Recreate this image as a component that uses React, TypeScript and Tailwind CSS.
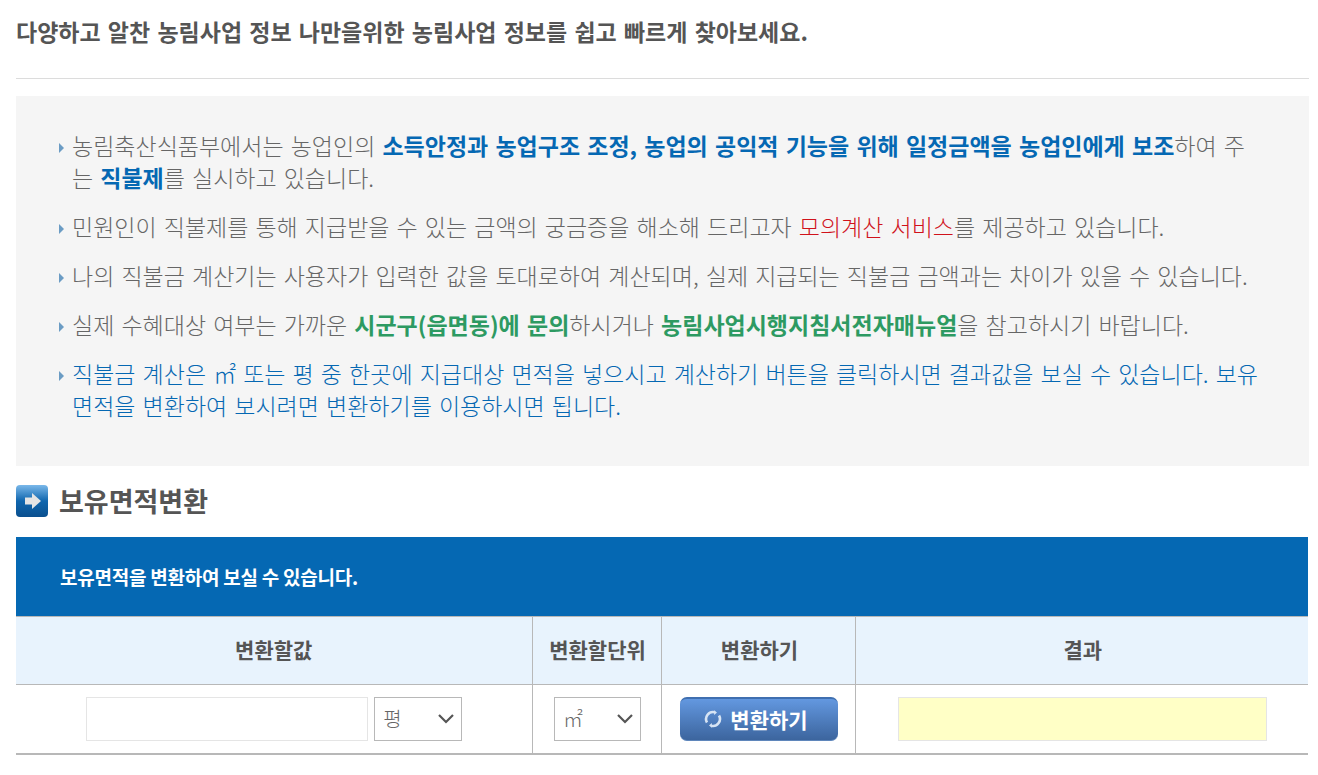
const font = "font-['Noto_Sans_CJK_KR','Noto_Sans',sans-serif]";

const Bullet = () => (
    <svg width="5" height="10" viewBox="0 0 5 10" className="absolute left-[43px] top-[14px]">
        <path d="M0 0 L5 5 L0 10 Z" fill="#6b9cc4" />
    </svg>
);

const Blue = ({ children }: { children: React.ReactNode }) => (
    <strong className="font-bold text-[#0568b3]">{children}</strong>
);

const Green = ({ children }: { children: React.ReactNode }) => (
    <strong className="font-bold text-[#2d9a62]">{children}</strong>
);

const Item = ({ children, className = "" }: { children: React.ReactNode; className?: string }) => (
    <li className={`relative pl-[56px] text-[23px] font-light leading-[32px] [word-spacing:2px] ${className}`}>
        <Bullet />
        {children}
    </li>
);

const UnitSelect = ({ label, width }: { label: string; width: string }) => (
    <div className={`flex h-[44px] items-center justify-between border border-[#b8b8b8] bg-white pl-[8px] pr-[6px] text-[20px] font-light text-[#666] ${width}`}>
        <span>{label}</span>
        <svg width="18" height="12" viewBox="0 0 18 12" fill="none" stroke="#555" strokeWidth="2.2">
            <path d="M2 2l7 7 7-7" />
        </svg>
    </div>
);

const App = () => {
    return (
        <div className={`h-[775px] w-[1318px] overflow-hidden bg-white pl-[16px] pr-[9px] text-[#666] ${font}`}>
            <h2 className="h-[79px] border-b border-[#dcdcdc] pt-[14px] text-[23px] font-bold leading-[34px] text-[#555] [word-spacing:2px]">
                다양하고 알찬 농림사업 정보 나만을위한 농림사업 정보를 쉽고 빠르게 찾아보세요.
            </h2>

            <div className="mt-[17px] h-[370px] bg-[#f5f5f5] pt-[33px] pr-[50px]">
                <ul className="flex flex-col gap-[17px]">
                    <Item>
                        농림축산식품부에서는 농업인의 <Blue>소득안정과 농업구조 조정, 농업의 공익적 기능을 위해 일정금액을 농업인에게 보조</Blue>하여 주는 <Blue>직불제</Blue>를 실시하고 있습니다.
                    </Item>
                    <Item>
                        민원인이 직불제를 통해 지급받을 수 있는 금액의 궁금증을 해소해 드리고자 <span className="text-[#d0121b]">모의계산 서비스</span>를 제공하고 있습니다.
                    </Item>
                    <Item>
                        나의 직불금 계산기는 사용자가 입력한 값을 토대로하여 계산되며, 실제 지급되는 직불금 금액과는 차이가 있을 수 있습니다.
                    </Item>
                    <Item>
                        실제 수혜대상 여부는 가까운 <Green>시군구(읍면동)에 문의</Green>하시거나 <Green>농림사업시행지침서전자매뉴얼</Green>을 참고하시기 바랍니다.
                    </Item>
                    <Item className="text-[#0568b3]">
                        직불금 계산은 ㎡ 또는 평 중 한곳에 지급대상 면적을 넣으시고 계산하기 버튼을 클릭하시면 결과값을 보실 수 있습니다. 보유면적을 변환하여 보시려면 변환하기를 이용하시면 됩니다.
                    </Item>
                </ul>
            </div>

            <div className="flex h-[71px] items-center gap-[11px] pb-[2px]">
                <svg width="32" height="32" viewBox="0 0 32 32">
                    <defs>
                        <linearGradient id="arrowBox" x1="0" y1="0" x2="0" y2="1">
                            <stop offset="0" stopColor="#7ab8ea" />
                            <stop offset="0.5" stopColor="#0f66ae" />
                            <stop offset="1" stopColor="#0a4f8e" />
                        </linearGradient>
                    </defs>
                    <rect width="32" height="32" rx="4" fill="url(#arrowBox)" />
                    <path d="M9 12.5h7V8l9 8-9 8v-4.5H9z" fill="#e4e4e4" />
                </svg>
                <h3 className="text-[27px] font-bold leading-[34px] text-[#555]">보유면적변환</h3>
            </div>

            <div className="flex h-[79px] w-[1292px] items-center bg-[#0568b3] pl-[44px] pt-[2px] text-[19px] font-bold tracking-[-0.25px] text-white">
                보유면적을 변환하여 보실 수 있습니다.
            </div>

            <table className="w-[1292px] table-fixed border-collapse border-t border-b-2 border-[#b8b8b8]">
                <colgroup>
                    <col className="w-[516px]" />
                    <col className="w-[129px]" />
                    <col className="w-[194px]" />
                    <col />
                </colgroup>
                <thead>
                    <tr className="h-[68px] border-b border-[#b8b8b8] bg-[#e8f3fd] text-[21px] font-bold text-[#555]">
                        <th className="border-r border-[#b8b8b8] pb-[2px]">변환할값</th>
                        <th className="border-r border-[#b8b8b8] pb-[2px] pl-[2px]">변환할단위</th>
                        <th className="border-r border-[#b8b8b8] pb-[2px] pl-[3px]">변환하기</th>
                        <th className="pb-[2px] pl-[2px]">결과</th>
                    </tr>
                </thead>
                <tbody>
                    <tr className="h-[69px]">
                        <td className="border-r border-[#b8b8b8] pl-[1px]">
                            <div className="flex justify-center gap-[6px]">
                                <input type="text" className="h-[44px] w-[282px] border border-[#e5e5e5] bg-white" />
                                <UnitSelect label="평" width="w-[88px]" />
                            </div>
                        </td>
                        <td className="border-r border-[#b8b8b8] pl-[2px]">
                            <div className="flex justify-center">
                                <UnitSelect label="㎡" width="w-[87px]" />
                            </div>
                        </td>
                        <td className="border-r border-[#b8b8b8] pl-[2px]">
                            <div className="flex justify-center">
                                <button className="flex h-[44px] w-[158px] items-center justify-center gap-[8px] rounded-[7px] border-t-2 border-b border-t-[#3f6fb0] border-b-[#5f86bb] bg-gradient-to-b from-[#6398e0] to-[#3c659e] pr-[6px] text-[21px] font-bold text-white">
                                    <svg width="18" height="18" viewBox="0 0 18 18" fill="none" stroke="#d7e4f4" strokeWidth="2.6">
                                        <path d="M3 12.5A7 7 0 0 1 11 2.3" />
                                        <path d="M15 5.5A7 7 0 0 1 7 15.7" />
                                        <path d="M10 0.3l3 2.2-2.8 2.4z" fill="#d7e4f4" stroke="none" />
                                        <path d="M8 17.7l-3-2.2 2.8-2.4z" fill="#d7e4f4" stroke="none" />
                                    </svg>
                                    변환하기
                                </button>
                            </div>
                        </td>
                        <td className="pl-[2px]">
                            <div className="flex justify-center">
                                <div className="h-[44px] w-[369px] border border-[#e5e5e5] bg-[#ffffc6]" />
                            </div>
                        </td>
                    </tr>
                </tbody>
            </table>
        </div>
    );
};

export default App;
